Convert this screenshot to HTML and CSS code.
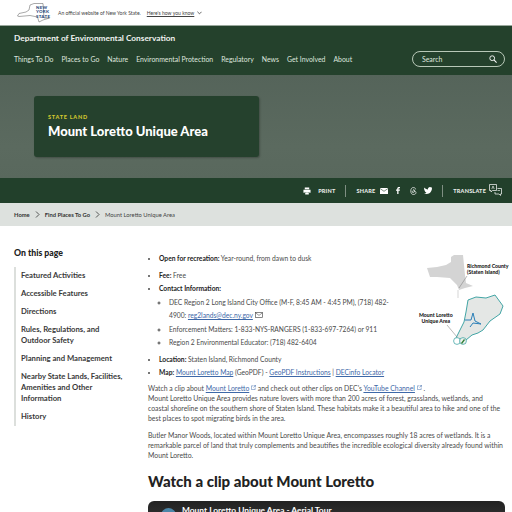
FILE: index.html
```html
<!DOCTYPE html>
<html lang="en">
<head>
  <meta charset="UTF-8">
  <title>Mount Loretto Unique Area</title>
  <meta name="viewport" content="width=device-width, initial-scale=1.0">
  <link rel="stylesheet" href="styles.css">
</head>
<body>
  <div class="gov-bar">
    <div class="gov-logo">
      <svg class="ny-map" width="33" height="20" viewBox="0 0 33 20"><path d="M0.5 13 L2 10.5 L9 9 L12 7 L13 2 L17 0.5 L26 0.5 L27 15 L32.5 15 L26 17 L22 19 L20.5 14 L13 12.5 L2 13.5 Z" fill="#fff" stroke="#555" stroke-width="0.5"/></svg>
      <span class="gov-logo-text">NEW<br>YORK<br>STATE</span>
    </div>
    <span class="gov-note">An official website of New York State.</span>
    <span class="gov-link">Here's how you know</span>
    <svg width="5" height="4" viewBox="0 0 6 4"><path d="M0.5 0.5 L3 3 L5.5 0.5" fill="none" stroke="#333" stroke-width="0.9"/></svg>
  </div>

  <header class="site-header">
    <div class="agency">Department of Environmental Conservation</div>
    <nav class="main-nav">
      <span>Things To Do</span>
      <span>Places to Go</span>
      <span>Nature</span>
      <span>Environmental Protection</span>
      <span>Regulatory</span>
      <span>News</span>
      <span>Get Involved</span>
      <span>About</span>
      <div class="search">
        <span>Search</span>
        <svg width="8" height="8" viewBox="0 0 9 9"><circle cx="3.6" cy="3.6" r="2.7" fill="none" stroke="#fff" stroke-width="1"/><path d="M5.6 5.6 L8.5 8.5" stroke="#fff" stroke-width="1.2"/></svg>
      </div>
    </nav>
  </header>

  <section class="hero">
    <div class="hero-card">
      <div class="eyebrow">STATE LAND</div>
      <h1>Mount Loretto Unique Area</h1>
    </div>
  </section>

  <div class="tools">
    <svg width="8" height="8" viewBox="0 0 9 9"><path d="M2 0.5 H7 V2.5 H2 Z M0.5 3 H8.5 V6.5 H7 V5.5 H2 V6.5 H0.5 Z M2.5 6 H6.5 V8.5 H2.5 Z" fill="#fff"/></svg>
    <span class="tool-label">PRINT</span>
    <i class="tool-sep"></i>
    <span class="tool-label">SHARE</span>
    <svg class="icon-mail" width="8" height="6" viewBox="0 0 8 6"><rect width="8" height="6" fill="#fff"/><path d="M0 0.5 L4 3.3 L8 0.5" fill="none" stroke="#24412c" stroke-width="0.6"/></svg>
    <svg class="icon-fb" width="4" height="7" viewBox="0 0 4 7"><path d="M1.2 7 V3.8 H0 V2.6 H1.2 V1.6 C1.2 0.5 1.9 0 3 0 H4 V1.2 H3.2 C2.7 1.2 2.5 1.4 2.5 1.8 V2.6 H4 L3.8 3.8 H2.5 V7 Z" fill="#fff"/></svg>
    <svg class="icon-threads" width="7" height="8" viewBox="0 0 7 8"><path d="M5.6 2.4 C5.3 0.9 4.5 0.5 3.5 0.5 C1.7 0.5 0.8 1.8 0.8 4 C0.8 6.2 1.7 7.5 3.5 7.5 C5 7.5 6 6.7 6 5.6 C6 4.4 4.8 3.8 3.4 3.8 C2.6 3.8 2.2 4.2 2.2 4.8 C2.2 5.3 2.7 5.6 3.2 5.6 C4 5.6 4.5 5 4.5 3.9 C4.5 2.9 4 2.3 3.2 2.4" fill="none" stroke="#fff" stroke-width="0.7"/></svg>
    <svg width="8" height="7" viewBox="0 0 8 7"><path d="M0 0.5 C1 1.6 2.4 2.3 3.9 2.4 C3.8 1 4.8 0 6 0 C6.5 0 7 0.3 7.3 0.6 L8 0.3 L7.7 1.2 L8 1.1 C8 4.5 5.8 7 2.8 7 C1.7 7 0.8 6.7 0 6.2 C1 6.2 1.8 6 2.5 5.4 C1.6 5.2 1 4.7 0.8 4 C0.4 3.2 0 2 0 0.5 Z" fill="#fff"/></svg>
    <i class="tool-sep"></i>
    <span class="tool-label">TRANSLATE</span>
    <svg class="icon-translate" width="13" height="13" viewBox="0 0 13 13"><path d="M0.5 0.5 H7.5 V6.5 H3.5 L2 8 V6.5 H0.5 Z" fill="none" stroke="#fff" stroke-width="0.7"/><path d="M8.5 4.5 H12.5 V10 H11.5 V11.5 L10 10 H6 V8" fill="none" stroke="#fff" stroke-width="0.7"/><path d="M2.8 5 L4 2 L5.2 5" fill="none" stroke="#fff" stroke-width="0.6"/><path d="M8.5 6.5 H11" stroke="#fff" stroke-width="0.6"/></svg>
  </div>

  <nav class="crumbs">
    <b>Home</b>
    <svg width="5" height="7" viewBox="0 0 5 7"><path d="M1 0.5 L4 3.5 L1 6.5" fill="none" stroke="#333" stroke-width="0.8"/></svg>
    <b>Find Places To Go</b>
    <svg width="5" height="7" viewBox="0 0 5 7"><path d="M1 0.5 L4 3.5 L1 6.5" fill="none" stroke="#333" stroke-width="0.8"/></svg>
    <span>Mount Loretto Unique Area</span>
  </nav>

  <main class="page">
    <aside class="toc">
      <h2>On this page</h2>
      <ul>
        <li>Featured Activities</li>
        <li>Accessible Features</li>
        <li>Directions</li>
        <li>Rules, Regulations, and Outdoor Safety</li>
        <li>Planning and Management</li>
        <li>Nearby State Lands, Facilities, Amenities and Other Information</li>
        <li>History</li>
      </ul>
    </aside>

    <article class="content">
      <div class="facts-wrap">
        <ul class="facts">
          <li class="gap-after"><b>Open for recreation:</b> Year-round, from dawn to dusk</li>
          <li><b>Fee:</b> Free</li>
          <li><b>Contact Information:</b>
            <ul>
              <li>DEC Region 2 Long Island City Office (M-F, 8:45 AM - 4:45 PM), (718) 482-4900: <a>reg2lands@dec.ny.gov</a> <svg width="8" height="6" viewBox="0 0 8 6"><rect x="0.4" y="0.4" width="7.2" height="5.2" fill="none" stroke="#555" stroke-width="0.7"/><path d="M0.5 0.8 L4 3.4 L7.5 0.8" fill="none" stroke="#555" stroke-width="0.6"/></svg></li>
              <li>Enforcement Matters: 1-833-NYS-RANGERS (1-833-697-7264) or 911</li>
              <li>Region 2 Environmental Educator: (718) 482-6404</li>
            </ul>
          </li>
          <li><b>Location:</b> Staten Island, Richmond County</li>
          <li><b>Map:</b> <a>Mount Loretto Map</a> (GeoPDF) - <a>GeoPDF Instructions</a> | <a>DECinfo Locator</a></li>
        </ul>
        <div class="map-fig">
          <svg width="96" height="102" viewBox="0 0 96 102">
            <path d="M17 18 L27 17 L36 15 L41 12 L41 7 L44 5 L53 5 L55 25 L56 33 L63 36 L55 38 L49 40 L47 35 L40 28 L27 27 L20 27 Z" fill="#d4d4d4"/>
            <path d="M48 40 L48 48" stroke="#aaa" stroke-width="0.5"/>
            <path d="M49 38 L57 26" stroke="#777" stroke-width="0.5"/>
            <path d="M46 88 L50 80 L54 72 L56 62 L58 50 L66 47 L76 48 L85 45 L93 56 L90 64 L80 71 L73 80 L68 83 L62 85 L56 90 Z" fill="#e4e7e5" stroke="#2f9c9c" stroke-width="0.9"/>
            <path d="M55 70 L61 70 L63 63 L65 71 L71 74 L63 73 L60 77" fill="none" stroke="#2a7fb8" stroke-width="1"/>
            <circle cx="47" cy="91" r="3.4" fill="#fff" stroke="#2f9c9c" stroke-width="0.7"/>
            <circle cx="53" cy="91" r="3.4" fill="#eef2ee" stroke="#2f9c9c" stroke-width="0.7"/>
            <path d="M51 93 L54 89 L55 90 L52 94 Z" fill="#2f7d32"/>
            <path d="M37 75 L47 87" stroke="#777" stroke-width="0.5"/>
          </svg>
          <span class="map-label label-county">Richmond County<br>(Staten Island)</span>
          <span class="map-label label-area">Mount Loretto<br>Unique Area</span>
        </div>
      </div>

      <p class="clip-text">Watch a clip about <a>Mount Loretto</a> <svg class="ext" width="5" height="5" viewBox="0 0 6 6"><path d="M3 1 H0.5 V5.5 H5 V3 M3 3 L5.5 0.5 M3.5 0.5 H5.5 V2.5" fill="none" stroke="#3d68a8" stroke-width="0.6"/></svg> and check out other clips on DEC's <a>YouTube Channel</a> <svg class="ext" width="5" height="5" viewBox="0 0 6 6"><path d="M3 1 H0.5 V5.5 H5 V3 M3 3 L5.5 0.5 M3.5 0.5 H5.5 V2.5" fill="none" stroke="#3d68a8" stroke-width="0.6"/></svg> .<br>Mount Loretto Unique Area provides nature lovers with more than 200 acres of forest, grasslands, wetlands, and coastal shoreline on the southern shore of Staten Island. These habitats make it a beautiful area to hike and one of the best places to spot migrating birds in the area.</p>
      <p>Butler Manor Woods, located within Mount Loretto Unique Area, encompasses roughly 18 acres of wetlands. It is a remarkable parcel of land that truly complements and beautifies the incredible ecological diversity already found within Mount Loretto.</p>

      <h2 class="clip-title">Watch a clip about Mount Loretto</h2>
      <div class="video">
        <span class="video-avatar"></span>
        <span class="video-title">Mount Loretto Unique Area - Aerial Tour</span>
      </div>
    </article>
  </main>
</body>
</html>
```

FILE: styles.css
```css
html {
  overflow: hidden;
  height: 512px;
}

body {
  margin: 0;
  height: 512px;
  overflow: hidden;
  background: #fff;
  color: #333;
  font-family: Lato, "Liberation Sans", sans-serif;
}

a {
  color: #3d68a8;
  text-decoration: underline;
}

/* top bar */
.gov-bar {
  display: flex;
  align-items: center;
  height: 25px;
  padding-left: 17px;
  box-sizing: border-box;
  font-size: 5.05px;
  color: #444;
}

.gov-logo {
  display: flex;
  align-items: center;
  width: 41px;
}

.ny-map {
  flex-shrink: 0;
  margin-right: -14px;
}

.gov-logo-text {
  position: relative;
  font-size: 4.4px;
  font-weight: 900;
  line-height: 4.4px;
  letter-spacing: 0.3px;
  color: #2b4a7d;
}

.gov-note {
  margin-right: 6px;
}

.gov-link {
  text-decoration: underline;
  margin-right: 3px;
}

/* header */
.site-header {
  height: 50px;
  background: #24412c;
  border-top: 1px solid #9aa89d;
  box-sizing: border-box;
  color: #dfe6df;
  padding: 0 14px;
}

.agency {
  box-sizing: border-box;
  padding-top: 7px;
  height: 19px;
  font-size: 8.3px;
  font-weight: 700;
  color: #f1f3f1;
}

.main-nav {
  display: flex;
  align-items: center;
  gap: 8px;
  font-size: 6.9px;
  height: 22px;
  margin-top: 3px;
}

.search {
  display: flex;
  justify-content: space-between;
  align-items: center;
  box-sizing: border-box;
  width: 93px;
  height: 16px;
  margin-left: auto;
  margin-right: -7px;
  padding: 0 7px 0 9px;
  border: 1px solid #b8c8b8;
  border-radius: 8px;
}

/* hero */
.hero {
  height: 103px;
  box-sizing: border-box;
  padding: 21px 0 0 34px;
  background: linear-gradient(180deg, #55645a, #5b6a5f 70%, #59685d);
}

.hero-card {
  width: 225px;
  height: 61px;
  box-sizing: border-box;
  padding: 18px 14px 0;
  background: #25412d;
  border-radius: 3px;
  box-shadow: 1px 1px 2px rgba(0, 0, 0, 0.25);
}

.eyebrow {
  font-size: 5.5px;
  line-height: 7px;
  font-weight: 900;
  letter-spacing: 0.75px;
  color: #d3c72f;
}

.hero-card h1 {
  margin: 2px 0 0;
  font-size: 13px;
  line-height: 16px;
  font-weight: 900;
  color: #fff;
}

/* share strip */
.tools {
  display: flex;
  align-items: center;
  justify-content: flex-end;
  gap: 7px;
  height: 25px;
  padding-right: 10px;
  background: #22402b;
  color: #e8ece8;
}

.tool-label {
  font-size: 5.5px;
  font-weight: 900;
  letter-spacing: 0.2px;
}

.tool-sep {
  width: 1px;
  height: 12px;
  margin: 0 3px;
  background: #7f8f83;
}

.icon-mail {
  margin-left: -2px;
}

.icon-fb {
  margin-left: 1px;
}

.icon-threads {
  margin-left: 3px;
}

.icon-translate {
  margin-left: -4px;
}

/* breadcrumbs */
.crumbs {
  display: flex;
  align-items: center;
  gap: 5px;
  height: 23px;
  padding-left: 14px;
  background: #dde1de;
  font-size: 5.8px;
  color: #444;
}

.crumbs b {
  color: #333;
  font-weight: 700;
}

/* main layout */
.page {
  display: flex;
  height: 286px;
  overflow: hidden;
}

.toc {
  width: 148px;
  flex-shrink: 0;
  padding: 22px 0 0 14px;
  box-sizing: border-box;
}

.toc h2 {
  margin: 0 0 9px;
  font-size: 8.7px;
  line-height: 10px;
  font-weight: 900;
  color: #222;
}

.toc ul {
  margin: 0;
  padding: 0 0 0 5px;
  list-style: none;
  border-left: 2px solid #dcdfdc;
  font-size: 7.7px;
  line-height: 11px;
  font-weight: 700;
  color: #3a3a3a;
  width: 105px;
}

.toc li {
  padding: 3px 0 4px;
}

.content {
  width: 358px;
  font-size: 6.85px;
  line-height: 10px;
  color: #4a4a4a;
}

.facts-wrap {
  position: relative;
  padding-top: 26px;
}

.facts {
  margin: 0;
  padding: 0 0 0 11px;
  width: 240px;
  font-size: 6.7px;
  line-height: 13.5px;
}

.facts b {
  font-weight: 700;
  color: #222;
}

.facts .gap-after {
  margin-bottom: 3px;
}

.facts ul {
  margin: 0;
  padding-left: 10px;
}

.facts li::marker {
  font-size: 6px;
}

.facts > li:nth-child(3) {
  margin-bottom: 3px;
}

.map-fig {
  position: absolute;
  top: 24px;
  left: 262px;
  width: 96px;
  height: 102px;
}

.map-label {
  position: absolute;
  font-size: 5.2px;
  line-height: 6px;
  font-weight: 900;
  color: #222;
  white-space: nowrap;
}

.label-county {
  left: 57px;
  top: 13px;
}

.label-area {
  left: 9px;
  top: 62px;
  text-align: center;
}

.content p {
  width: 355px;
  margin: 0 0 7px;
  line-height: 10px;
}

.clip-text {
  padding-top: 3px;
}

.ext {
  vertical-align: 1px;
}

.clip-title {
  margin: 12px 0 11px;
  font-size: 15px;
  line-height: 18px;
  font-weight: 900;
  color: #222;
}

.video {
  display: flex;
  align-items: flex-start;
  width: 357px;
  height: 60px;
  padding: 4px 0 0 13px;
  box-sizing: border-box;
  background: linear-gradient(180deg, #222, #555);
  border-radius: 6px;
  color: #fff;
  font-size: 8.4px;
  font-weight: 700;
}

.video-avatar {
  width: 15px;
  height: 15px;
  margin: 3px 6px 0 0;
  border-radius: 50%;
  background: #4d86a8;
}

.video-title {
  line-height: 10px;
}
```
